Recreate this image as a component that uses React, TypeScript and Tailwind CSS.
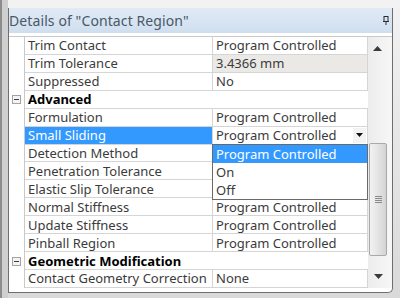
import React from "react";

type Row =
  | { kind: "prop"; name: string; value: string; readOnly?: boolean; selected?: boolean }
  | { kind: "cat"; name: string };

// rows under the open dropdown list keep an empty value: the list covers them
const rows: Row[] = [
  { kind: "prop", name: "Trim Contact", value: "Program Controlled" },
  { kind: "prop", name: "Trim Tolerance", value: "3.4366 mm", readOnly: true },
  { kind: "prop", name: "Suppressed", value: "No" },
  { kind: "cat", name: "Advanced" },
  { kind: "prop", name: "Formulation", value: "Program Controlled" },
  { kind: "prop", name: "Small Sliding", value: "Program Controlled", selected: true },
  { kind: "prop", name: "Detection Method", value: "" },
  { kind: "prop", name: "Penetration Tolerance", value: "" },
  { kind: "prop", name: "Elastic Slip Tolerance", value: "" },
  { kind: "prop", name: "Normal Stiffness", value: "Program Controlled" },
  { kind: "prop", name: "Update Stiffness", value: "Program Controlled" },
  { kind: "prop", name: "Pinball Region", value: "Program Controlled" },
  { kind: "cat", name: "Geometric Modification" },
  { kind: "prop", name: "Contact Geometry Correction", value: "None" },
];

const options = ["Program Controlled", "On", "Off"];

function Collapse() {
  return (
    <span className="flex h-[9px] w-[9px] items-center justify-center border border-[#a3a3a3] bg-[#f4f4f4]">
      <span className="h-px w-[5px] bg-[#3c3c3c]" />
    </span>
  );
}

function Pin() {
  return (
    <svg width="6" height="9" viewBox="0 0 6 9" className="text-[#2b2b2b]">
      <rect x="1" y="0.5" width="4" height="5" fill="none" stroke="currentColor" />
      <line x1="0" y1="5.5" x2="6" y2="5.5" stroke="currentColor" />
      <line x1="3" y1="6" x2="3" y2="9" stroke="currentColor" />
    </svg>
  );
}

function Scrollbar() {
  return (
    <div className="relative w-[24px] bg-gradient-to-r from-[#ececec] to-[#f7f7f7]">
      <svg width="9" height="5" viewBox="0 0 9 5" className="absolute left-[5px] top-[9px]">
        <path d="M4.5 0 L9 5 L0 5 Z" fill="#3a3a3a" />
      </svg>
      <div className="absolute left-[1px] top-[106px] flex h-[113px] w-[18px] items-center justify-center rounded-[2px] border border-[#a9a9a9] bg-gradient-to-r from-[#f2f2f2] via-[#e4e4e4] to-[#d3d3d3]">
        <div className="flex flex-col gap-[1px]">
          <span className="h-px w-[7px] bg-[#8a8a8a]" />
          <span className="h-px w-[7px] bg-[#8a8a8a]" />
          <span className="h-px w-[7px] bg-[#8a8a8a]" />
          <span className="h-px w-[7px] bg-[#8a8a8a]" />
        </div>
      </div>
      <svg width="9" height="5" viewBox="0 0 9 5" className="absolute left-[6px] top-[237px]">
        <path d="M0 0 L9 0 L4.5 5 Z" fill="#3a3a3a" />
      </svg>
    </div>
  );
}

export default function App() {
  return (
    <div
      className="relative h-[298px] w-[400px] overflow-hidden bg-gradient-to-b from-[#f2f2f2] to-[#d9d9d9] text-[13px] leading-[16px] text-[#3b3b3b]"
      style={{ fontFamily: '"Noto Sans", "Open Sans", sans-serif' }}
    >
      <div className="absolute left-0 top-0 h-full w-[8px] border-l-2 border-[#8c8c8c] bg-[#cfcfcf]" />
      <div className="ml-[8px] mt-[8px] flex h-[285px] w-[385px] flex-col overflow-hidden rounded-br-[5px] border-x border-b border-[#6e6e6e] bg-white">
        <div className="flex h-[25px] shrink-0 items-center justify-between bg-gradient-to-b from-[#e1ebf6] to-[#cfdeef] pr-[3px]">
          <span className="text-[14px] leading-none tracking-[0.1px] text-[#4a5868]">Details of "Contact Region"</span>
          <Pin />
        </div>
        <div className="h-[3px] shrink-0 bg-white" />
        <div className="flex shrink-0 border-t border-[#c9c9c9]">
          <div className="relative flex h-[251px] w-[359px] flex-col">
            {rows.map((row, i) =>
              row.kind === "cat" ? (
                <div key={i} className="flex min-h-0 flex-1">
                  <div className="flex w-[16px] items-center justify-center border-r border-[#c9c9c9]">
                    <Collapse />
                  </div>
                  <div className="flex flex-1 items-center border-b border-[#d5d5d5] pl-[3px] font-bold text-black">
                    {row.name}
                  </div>
                </div>
              ) : (
                <div key={i} className="flex min-h-0 flex-1">
                  <div className="w-[16px] border-r border-[#c9c9c9]" />
                  <div
                    className={`flex w-[188px] items-center overflow-hidden whitespace-nowrap border-b border-r border-[#d5d5d5] pl-[3px] ${
                      row.selected ? "bg-[#3399ff] text-white" : ""
                    }`}
                  >
                    {row.name}
                  </div>
                  <div
                    className={`relative flex flex-1 items-center overflow-hidden whitespace-nowrap border-b border-r border-[#d5d5d5] pl-[3px] ${
                      row.readOnly ? "bg-[#ebe9e6]" : ""
                    }`}
                  >
                    {row.value}
                    {row.selected && (
                      <span className="absolute right-[1px] top-[1px] flex h-[15px] w-[13px] items-center justify-center bg-[#f3f3f3]">
                        <svg width="7" height="4" viewBox="0 0 7 4">
                          <path d="M0 0 L7 0 L3.5 4 Z" fill="#111" />
                        </svg>
                      </span>
                    )}
                  </div>
                </div>
              )
            )}
            <div className="absolute left-[203px] top-[107px] flex h-[56px] w-[156px] flex-col border border-[#6a6a6a] bg-white">
              {options.map((opt, i) => (
                <div
                  key={opt}
                  className={`flex h-[18px] items-center pl-[3px] ${i === 0 ? "bg-[#3399ff] text-white" : ""}`}
                >
                  {opt}
                </div>
              ))}
            </div>
          </div>
          <Scrollbar />
        </div>
      </div>
    </div>
  );
}
